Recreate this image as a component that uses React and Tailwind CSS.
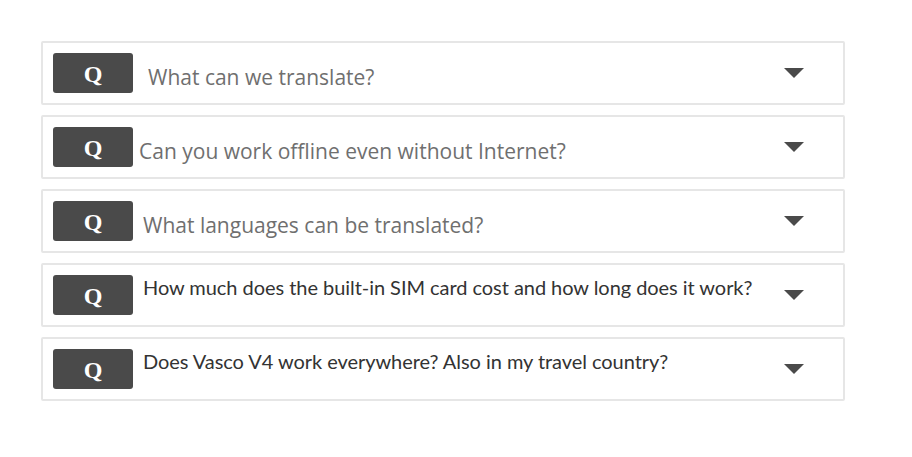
const faqs = [
  { q: 'What can we translate?', ml: 'ml-[15px]', mt: 'mt-[10px]', style: 'light' },
  { q: 'Can you work offline even without Internet?', ml: 'ml-[6px]', mt: 'mt-[10px]', style: 'light' },
  { q: 'What languages can be translated?', ml: 'ml-[10px]', mt: 'mt-[10px]', style: 'light' },
  { q: 'How much does the built-in SIM card cost and how long does it work?', ml: 'ml-[10px]', mt: 'mt-[-2px]', style: 'dark' },
  { q: 'Does Vasco V4 work everywhere? Also in my travel country?', ml: 'ml-[10px]', mt: 'mt-[-2px]', style: 'dark' },
];

function Caret() {
  return (
    <svg width="20" height="10" viewBox="0 0 20 10" className="block">
      <path d="M0 0 H20 L10 10 Z" fill="#4a4a4a" />
    </svg>
  );
}

export default function App() {
  return (
    <div className="w-[912px] h-[457px] bg-white pt-[41px] pl-[41px]">
      <div className="w-[804px] flex flex-col gap-[10px]">
        {faqs.map((item) => (
          <div
            key={item.q}
            className="h-[64px] border-2 border-[#e6e6e6] rounded-[2px] flex items-start pl-[10px] pr-[39px] pt-[10px]"
          >
            <div className="w-[80px] h-[40px] shrink-0 rounded-[3px] bg-[#4a4a4a] flex items-center justify-center">
              <span className="text-white text-[24px] font-bold leading-none font-['Liberation_Serif',serif] translate-y-[1px]">
                Q
              </span>
            </div>
            <p
              className={
                item.style === 'light'
                  ? `${item.ml} ${item.mt} text-[21px] leading-[28px] text-[#6f6f6f] font-['Open_Sans',sans-serif] whitespace-nowrap`
                  : `${item.ml} ${item.mt} text-[20px] tracking-[-0.05px] leading-[28px] text-[#333333] font-['Lato',sans-serif] whitespace-nowrap`
              }
            >
              {item.q}
            </p>
            <div className="ml-auto mt-[15px] shrink-0">
              <Caret />
            </div>
          </div>
        ))}
      </div>
    </div>
  );
}
